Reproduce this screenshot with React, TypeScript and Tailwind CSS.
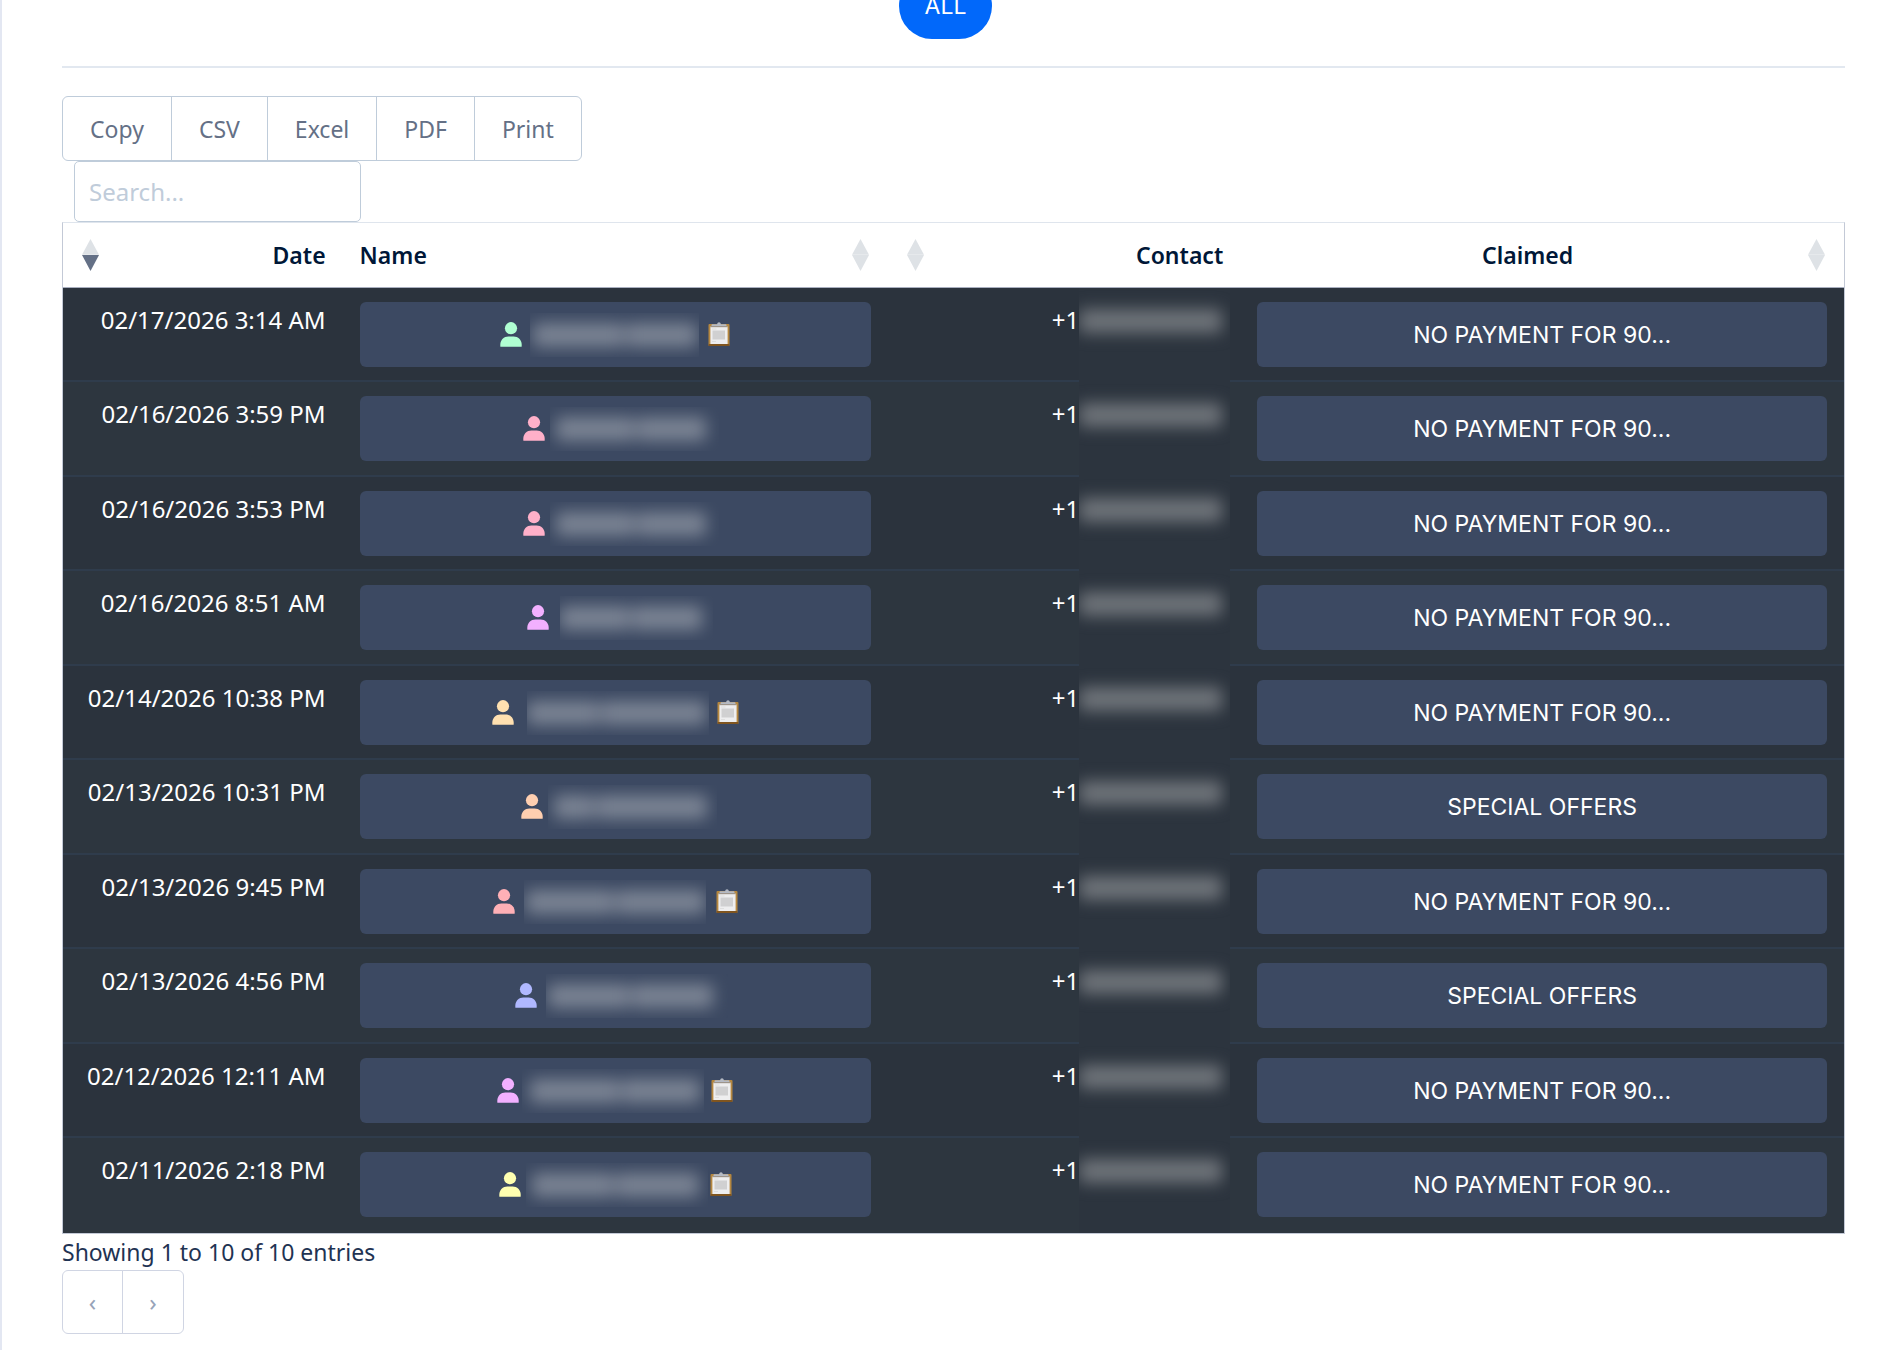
import React from "react";

type Entry = {
  date: string;
  color: string;
  nameWidth: number;
  maskLeft: number;
  maskWidth: number;
  words: [number, number];
  note: boolean;
  claimed: string;
};

const NO_PAYMENT = "NO PAYMENT FOR 90...";
const SPECIAL = "SPECIAL OFFERS";

const entries: Entry[] = [
  { date: "02/17/2026 3:14 AM", color: "#b0ffd2", nameWidth: 186, maskLeft: 8, maskWidth: 169, words: [9, 7], note: true, claimed: NO_PAYMENT },
  { date: "02/16/2026 3:59 PM", color: "#ffb0c9", nameWidth: 163, maskLeft: 5, maskWidth: 169, words: [8, 7], note: false, claimed: NO_PAYMENT },
  { date: "02/16/2026 3:53 PM", color: "#ffb0c9", nameWidth: 163, maskLeft: 5, maskWidth: 169, words: [8, 7], note: false, claimed: NO_PAYMENT },
  { date: "02/16/2026 8:51 AM", color: "#f2b0ff", nameWidth: 155, maskLeft: 11, maskWidth: 153, words: [7, 7], note: false, claimed: NO_PAYMENT },
  { date: "02/14/2026 10:38 PM", color: "#ffe0b0", nameWidth: 203, maskLeft: 13, maskWidth: 182, words: [7, 10], note: true, claimed: NO_PAYMENT },
  { date: "02/13/2026 10:31 PM", color: "#ffcfb0", nameWidth: 166, maskLeft: 5, maskWidth: 169, words: [4, 11], note: false, claimed: SPECIAL },
  { date: "02/13/2026 9:45 PM", color: "#ffb0b6", nameWidth: 201, maskLeft: 9, maskWidth: 182, words: [9, 9], note: true, claimed: NO_PAYMENT },
  { date: "02/13/2026 4:56 PM", color: "#b0b8ff", nameWidth: 178, maskLeft: 9, maskWidth: 182, words: [8, 8], note: false, claimed: SPECIAL },
  { date: "02/12/2026 12:11 AM", color: "#f2b0ff", nameWidth: 192, maskLeft: 3, maskWidth: 182, words: [8, 7], note: true, claimed: NO_PAYMENT },
  { date: "02/11/2026 2:18 PM", color: "#ffffb0", nameWidth: 189, maskLeft: 5, maskWidth: 182, words: [8, 8], note: true, claimed: NO_PAYMENT },
];

const exportButtons = ["Copy", "CSV", "Excel", "PDF", "Print"];

function PersonIcon({ color }: { color: string }) {
  return (
    <svg className="h-[25px] w-[22px] shrink-0" viewBox="0 0 22 25" fill={color} aria-hidden="true">
      <circle cx="11" cy="6.2" r="6.1" />
      <path d="M.3 24.2v-1.6c0-4.7 3.6-8.2 8.1-8.2h5.2c4.5 0 8.1 3.5 8.1 8.2v1.6c0 .4-.2.6-.6.6H.9c-.4 0-.6-.2-.6-.6Z" />
    </svg>
  );
}

function ClipboardIcon() {
  return (
    <svg className="h-[25px] w-[22px] shrink-0" viewBox="0 0 22 25" aria-hidden="true">
      <rect x=".5" y="2" width="21" height="22" rx="1" fill="#b5873f" />
      <rect x=".5" y="22" width="21" height="2" rx=".8" fill="#80551f" />
      <rect x="2.4" y="4.400" width="17.200" height="17.600" fill="#eeeeef" />
      <rect x="4.500" y="8.500" width="12.500" height="9" fill="#d0d0d1" />
      <path d="M4 7h4.500M4 19.500h4" stroke="#dadada" strokeWidth=".8" />
      <path d="M3.500 4.600V2.900c0-.4.300-.7.700-.7h4.900C9.300 1 10 .2 11 .2s1.700.8 1.900 2h4.900c.4 0 .7.300.7.700v1.700Z" fill="#b5bac4" />
      <path d="M2.500 4.700h17" stroke="#8d857b" strokeWidth=".9" />
    </svg>
  );
}

function SortIcon({ active = false }: { active?: boolean }) {
  return (
    <svg className="h-8 w-[17px] shrink-0" viewBox="0 0 17 32" aria-hidden="true">
      <path d="M8.500 0 17 15.700H0Z" fill="#dee2e6" />
      <path d="M0 16h17L8.500 32Z" fill={active ? "#647086" : "#dee2e6"} />
    </svg>
  );
}

function HiddenName({ entry }: { entry: Entry }) {
  return (
    <span className="relative h-11 shrink-0" style={{ width: entry.nameWidth }}>
      <span
        className="absolute inset-y-0 flex items-center overflow-hidden"
        style={{
          left: entry.maskLeft,
          width: entry.maskWidth,
          paddingLeft: Math.max(0, 11 - entry.maskLeft),
          paddingRight: Math.max(0, entry.maskLeft + entry.maskWidth - entry.nameWidth + (entry.note ? 11 : 2)),
        }}
      >
        <span className="flex h-6 w-full gap-0.5 blur-[8px]">
          <span className="rounded-sm bg-[#7a8393]" style={{ flexGrow: entry.words[0] }} />
          <span className="rounded-sm bg-[#7a8393]" style={{ flexGrow: entry.words[1] }} />
        </span>
      </span>
    </span>
  );
}

export default function App() {
  return (
    <main className="min-h-screen overflow-hidden border-l-2 border-[#e3e7f2] bg-white pr-[57px] pl-[60px] font-['Noto_Sans',sans-serif] text-2xl leading-9 text-[#1f3353]">
      <div className="-mt-[27px] flex justify-center">
        <button type="button" className="mr-4 h-[66px] rounded-full bg-[#0168fa] px-[26px] font-[Inter,sans-serif] text-[23px] text-white">
          ALL
        </button>
      </div>
      <hr className="mt-[27px] border-t-2 border-[#e2e8f0]" />

      <div className="mt-7 flex text-[23px] text-[#647086]">
        {exportButtons.map((label) => (
          <button
            key={label}
            type="button"
            className="-ml-px h-[65px] border border-[#bfccda] px-[27px] first:ml-0 first:rounded-l-md last:rounded-r-md"
          >
            {label}
          </button>
        ))}
      </div>
      <div className="flex">
        <input
          type="search"
          aria-label="Search"
          placeholder="Search..."
          className="ml-3 h-[61px] w-[287px] rounded-[5px] border border-[#bfccda] px-3.5 text-[#1f3353] placeholder:text-[#c0ccda]"
        />
      </div>

      <table className="w-full table-fixed border-separate border-spacing-0 border border-[#c3c9d6] border-t-[#dfe5ed]">
        <colgroup>
          <col className="w-[15.700%]" />
          <col className="w-[30.600%]" />
          <col className="w-[19.800%]" />
          <col />
        </colgroup>
        <thead className="bg-white text-[23px] text-[#001737]">
          <tr>
            <th scope="col" className="h-[65px] border-b border-[#a9afbf] pr-[17px] pl-[19px]">
              <div className="flex items-center justify-between font-semibold">
                <SortIcon active />
                Date
              </div>
            </th>
            <th scope="col" className="border-b border-[#a9afbf] pr-[19px] pl-[17px]">
              <div className="flex items-center justify-between font-semibold">
                Name
                <SortIcon />
              </div>
            </th>
            <th scope="col" className="border-b border-[#a9afbf] pr-[17px] pl-[19px]">
              <div className="flex items-center justify-between font-semibold">
                <SortIcon />
                Contact
              </div>
            </th>
            <th scope="col" className="border-b border-[#a9afbf] pr-[19px] pl-[17px]">
              <div className="flex items-center gap-[10px] font-semibold">
                <span className="grow text-center">Claimed</span>
                <SortIcon />
              </div>
            </th>
          </tr>
        </thead>
        <tbody className="text-white">
          {entries.map((entry) => (
            <tr key={entry.date} className="group odd:h-[94px] odd:bg-[#2b333d] even:h-[95px] even:bg-[#2d363f] last:h-[94px]">
              <td className="border-b-2 border-[#2f3c4c] px-[17px] pt-[14px] text-right align-top whitespace-nowrap group-last:border-b-0">
                {entry.date}
              </td>
              <td className="border-b-2 border-[#2f3c4c] px-[17px] pt-[14px] align-top group-last:border-b-0">
                <button
                  type="button"
                  aria-label="Open contact"
                  className="flex h-[65px] w-full items-center justify-center rounded-md bg-[#3c4962]"
                >
                  <PersonIcon color={entry.color} />
                  <HiddenName entry={entry} />
                  {entry.note && <ClipboardIcon />}
                </button>
              </td>
              <td className="relative border-b-2 border-[#2f3c4c] px-[17px] pt-[14px] text-right align-top whitespace-nowrap group-last:border-b-0">
                <span className="mr-[144px]">+1</span>
                <span className="absolute top-0 right-[10px] -bottom-0.5 w-[151px] overflow-hidden bg-[#2c343e] pt-[21px] pr-2 group-last:bottom-0">
                  <span className="block h-6 w-full rounded-sm bg-[#6e7379] blur-[8px]" />
                </span>
              </td>
              <td className="border-b-2 border-[#2f3c4c] px-[17px] pt-[14px] align-top group-last:border-b-0">
                <button
                  type="button"
                  className="h-[65px] w-full rounded-md bg-[#3c4962] text-center font-[Inter,sans-serif] text-[23px]"
                >
                  {entry.claimed}
                </button>
              </td>
            </tr>
          ))}
        </tbody>
      </table>

      <p className="text-[23px]">Showing 1 to 10 of 10 entries</p>
      <nav aria-label="Pagination" className="flex text-[#97a3b9]">
        <button type="button" aria-label="Previous page" className="h-16 w-[61px] rounded-l-md border border-[#d0d5e3]">
          ‹
        </button>
        <button type="button" aria-label="Next page" className="-ml-px h-16 w-[62px] rounded-r-md border border-[#d0d5e3]">
          ›
        </button>
      </nav>
    </main>
  );
}
